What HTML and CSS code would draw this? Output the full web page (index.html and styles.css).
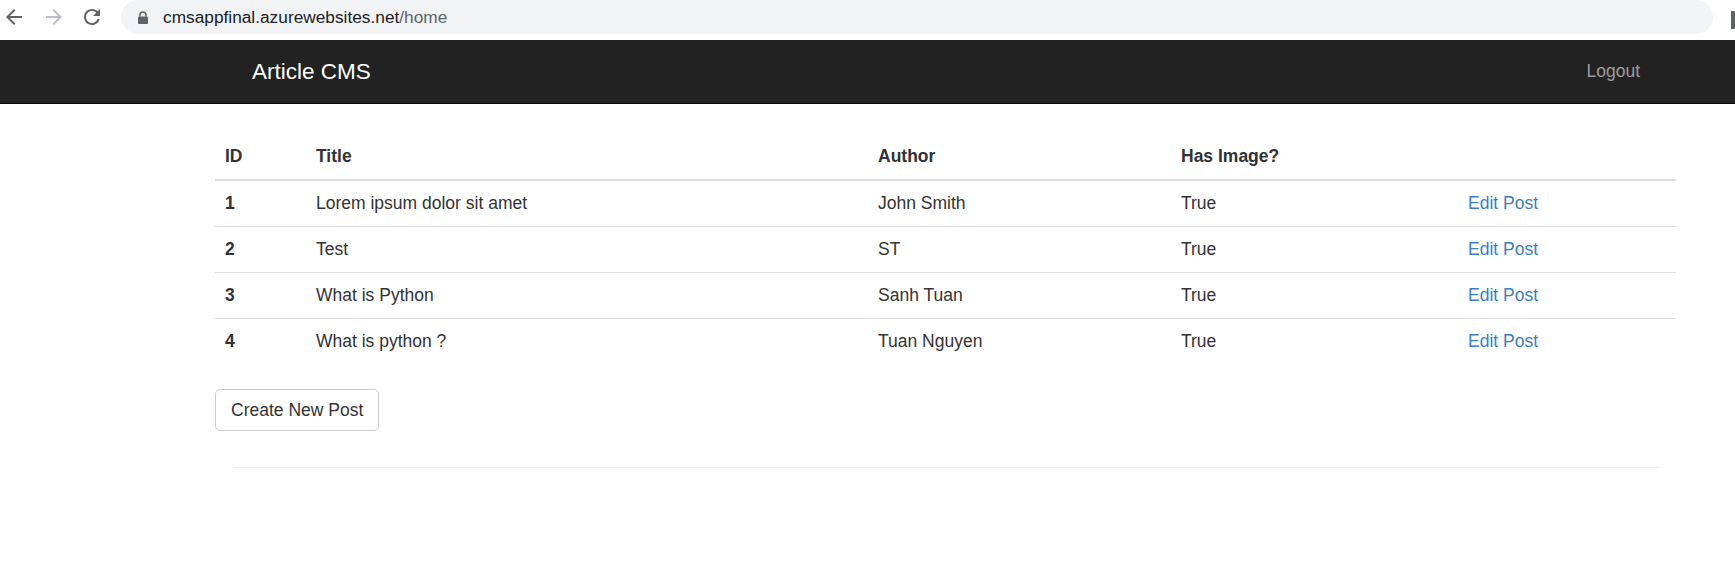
FILE: index.html
```html
<!DOCTYPE html>
<html lang="en">
<head>
<meta charset="utf-8">
<title>Article CMS</title>
<link rel="stylesheet" href="styles.css">
</head>
<body>
<div class="chrome">
  <svg class="ico ico-back" viewBox="0 0 24 24" width="24" height="24"><path d="M20 11H7.83l5.59-5.59L12 4l-8 8 8 8 1.41-1.41L7.83 13H20v-2z" fill="#5f6368"/></svg>
  <svg class="ico ico-fwd" viewBox="0 0 24 24" width="24" height="24"><path d="M4 11h12.17l-5.59-5.59L12 4l8 8-8 8-1.41-1.41L16.17 13H4v-2z" fill="#bdc1c6"/></svg>
  <svg class="ico ico-reload" viewBox="0 0 24 24" width="24" height="24"><path d="M17.65 6.35C16.2 4.9 14.21 4 12 4c-4.42 0-7.99 3.58-7.99 8s3.57 8 7.99 8c3.730 0 6.84-2.55 7.73-6h-2.08c-.82 2.33-3.04 4-5.650 4-3.31 0-6-2.69-6-6s2.690-6 6-6c1.66 0 3.14.69 4.22 1.78L13 11h7V4l-2.35 2.35z" fill="#5f6368"/></svg>
  <div class="omnibox">
    <svg class="lock" viewBox="0 0 10 13" width="10" height="13"><path d="M2 5.5V3.8C2 2.1 3.3 1 5 1s3 1.1 3 2.8v1.7" fill="none" stroke="#5f6368" stroke-width="1.6"/><rect x="0" y="5.5" width="10" height="7.5" rx="1" fill="#5f6368"/></svg>
    <span class="url"><span class="host">cmsappfinal.azurewebsites.net</span><span class="path">/home</span></span>
  </div>
  <span class="profile"></span>
</div>

<nav class="navbar">
  <div class="nav-inner">
    <a class="brand" href="#">Article CMS</a>
    <a class="nav-link" href="#">Logout</a>
  </div>
</nav>

<main class="page">
  <table class="posts">
    <colgroup>
      <col class="c-id"><col class="c-title"><col class="c-author"><col class="c-img"><col class="c-edit">
    </colgroup>
    <thead>
      <tr><th>ID</th><th>Title</th><th>Author</th><th>Has Image?</th><th></th></tr>
    </thead>
    <tbody>
      <tr><th>1</th><td>Lorem ipsum dolor sit amet</td><td>John Smith</td><td>True</td><td><a href="#">Edit Post</a></td></tr>
      <tr><th>2</th><td>Test</td><td>ST</td><td>True</td><td><a href="#">Edit Post</a></td></tr>
      <tr><th>3</th><td>What is Python</td><td>Sanh Tuan</td><td>True</td><td><a href="#">Edit Post</a></td></tr>
      <tr><th>4</th><td>What is python ?</td><td>Tuan Nguyen</td><td>True</td><td><a href="#">Edit Post</a></td></tr>
    </tbody>
  </table>
  <a class="btn" href="#">Create New Post</a>
  <hr class="rule">
</main>
</body>
</html>
```
FILE: styles.css
```css
html, body {
  margin: 0;
  padding: 0;
  background: #fff;
}
body {
  font-family: "Liberation Sans", Arial, Helvetica, sans-serif;
  font-size: 17.5px;
  line-height: 25px;
  color: #333;
}
a { text-decoration: none; }

/* browser chrome */
.chrome {
  display: flex;
  align-items: flex-start;
  height: 40px;
  background: #fff;
}
.ico { flex: none; margin-top: 5px; }
.ico-back { margin-left: 2px; }
.ico-fwd { margin-left: 16px; }
.ico-reload { margin-left: 14px; }
.omnibox {
  flex: 1;
  display: flex;
  align-items: center;
  height: 34px;
  margin-left: 17px;
  padding-left: 17px;
  border-radius: 17px;
  background: #f1f3f4;
}
.lock { flex: none; }
.url {
  margin-left: 15px;
  font-size: 17.3px;
  line-height: 20px;
  margin-top: -1px;
}
.host { color: #202124; }
.path { color: #5f6368; }
.profile {
  flex: none;
  width: 4px;
  height: 18px;
  margin-top: 11px;
  margin-left: 18px;
  background: #5f6368;
}

/* navbar */
.navbar {
  background: #222;
  border-bottom: 1px solid #080808;
  height: 63px;
}
.nav-inner {
  display: flex;
  align-items: center;
  justify-content: space-between;
  height: 63px;
  width: 1426px;
  margin-left: 233px;
}
.brand {
  padding: 0 19px;
  font-size: 22.5px;
  line-height: 25px;
  color: #fff;
}
.nav-link {
  padding: 0 19px;
  font-size: 17.5px;
  color: #9d9d9d;
}

/* content */
.page {
  width: 1461px;
  margin-left: 215px;
  padding-top: 30px;
}
.posts {
  width: 100%;
  table-layout: fixed;
  border-collapse: collapse;
  margin-bottom: 25px;
}
.c-id { width: 91px; }
.c-title { width: 562px; }
.c-author { width: 303px; }
.c-img { width: 287px; }
.c-edit { width: 218px; }
.posts th, .posts td {
  padding: 10px;
  line-height: 25px;
  text-align: left;
  vertical-align: top;
}
.posts th { font-weight: bold; }
.posts thead th {
  border-bottom: 2px solid #ddd;
}
.posts tbody th, .posts tbody td {
  border-top: 1px solid #ddd;
}
.posts a { color: #3a7fc1; }

.btn {
  display: inline-block;
  padding: 7.5px 15px;
  line-height: 25px;
  border: 1px solid #ccc;
  border-radius: 5px;
  color: #333;
  background: #fff;
}
.rule {
  margin: 36px 16px 0 18px;
  border: 0;
  border-top: 1px solid #eee;
  height: 0;
}
```
